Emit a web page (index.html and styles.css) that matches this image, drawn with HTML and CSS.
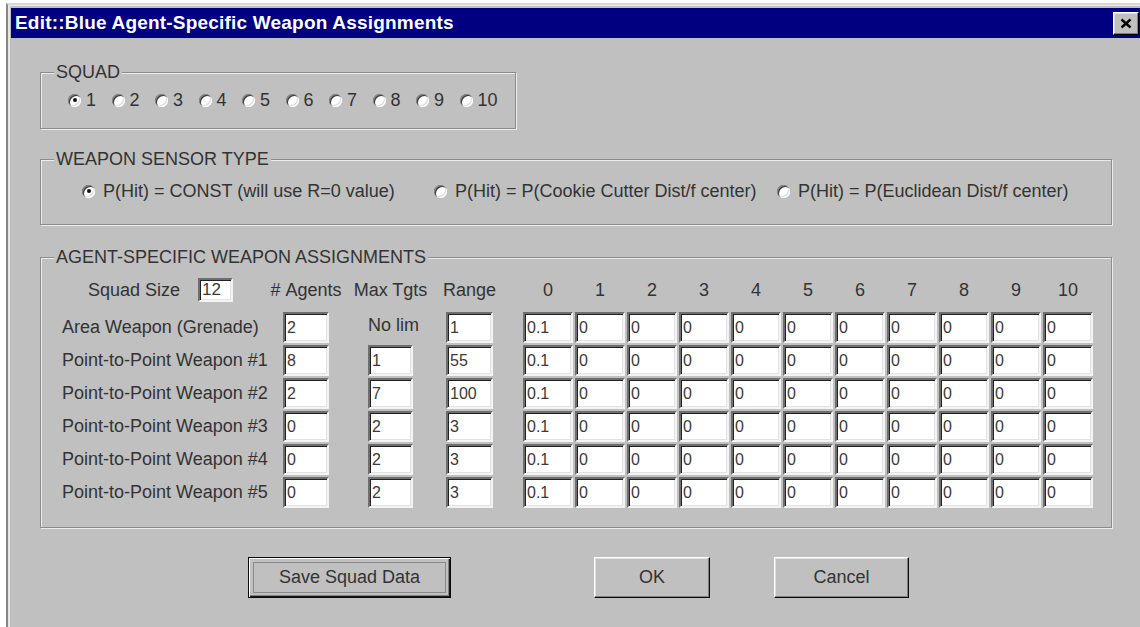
FILE: index.html
```html
<!DOCTYPE html>
<html lang="en">
<head>
<meta charset="utf-8">
<title>Edit::Blue Agent-Specific Weapon Assignments</title>
<link rel="stylesheet" href="styles.css">
</head>
<body>
<div class="window">
  <div class="titlebar">
    <span class="title">Edit::Blue Agent-Specific Weapon Assignments</span>
    <span class="close" aria-label="Close">
      <svg width="12" height="11" viewBox="0 0 12 11"><path d="M1.5 1.5 L10.5 9.5 M10.5 1.5 L1.5 9.5" stroke="#000" stroke-width="2.4" fill="none"/></svg>
    </span>
  </div>

  <div class="client">
    <fieldset class="group squad">
      <legend>SQUAD</legend>
      <div class="squad-opts">
        <label class="opt"><span class="radio on"></span>1</label>
        <label class="opt"><span class="radio"></span>2</label>
        <label class="opt"><span class="radio"></span>3</label>
        <label class="opt"><span class="radio"></span>4</label>
        <label class="opt"><span class="radio"></span>5</label>
        <label class="opt"><span class="radio"></span>6</label>
        <label class="opt"><span class="radio"></span>7</label>
        <label class="opt"><span class="radio"></span>8</label>
        <label class="opt"><span class="radio"></span>9</label>
        <label class="opt last"><span class="radio"></span>10</label>
      </div>
    </fieldset>

    <fieldset class="group sensor">
      <legend>WEAPON SENSOR TYPE</legend>
      <div class="sensor-opts">
        <label class="opt wide"><span class="radio on"></span>P(Hit) = CONST (will use R=0 value)</label>
        <label class="opt wide"><span class="radio"></span>P(Hit) = P(Cookie Cutter Dist/f center)</label>
        <label class="opt wide"><span class="radio"></span>P(Hit) = P(Euclidean Dist/f center)</label>
      </div>
    </fieldset>

    <fieldset class="group assign">
      <legend>AGENT-SPECIFIC WEAPON ASSIGNMENTS</legend>
      <div class="grid">
        <!-- header row -->
        <div class="hcell squad-size"><span>Squad Size</span><span class="field small">12</span></div>
        <div class="hcell"><span class="hd w46">#&nbsp;Agents</span></div>
        <div class="hcell"><span class="hd w45">Max Tgts</span></div>
        <div class="hcell"><span class="hd w47">Range</span></div>
        <div class="hcell"><span class="hd w50">0</span></div>
        <div class="hcell"><span class="hd w50">1</span></div>
        <div class="hcell"><span class="hd w50">2</span></div>
        <div class="hcell"><span class="hd w50">3</span></div>
        <div class="hcell"><span class="hd w50">4</span></div>
        <div class="hcell"><span class="hd w50">5</span></div>
        <div class="hcell"><span class="hd w50">6</span></div>
        <div class="hcell"><span class="hd w50">7</span></div>
        <div class="hcell"><span class="hd w50">8</span></div>
        <div class="hcell"><span class="hd w50">9</span></div>
        <div class="hcell"><span class="hd w50">10</span></div>

        <!-- Area weapon -->
        <div class="rlabel">Area Weapon (Grenade)</div>
        <div class="field w46">2</div>
        <div class="nolim w45">No lim</div>
        <div class="field w47">1</div>
        <div class="field w50">0.1</div><div class="field w50">0</div><div class="field w50">0</div><div class="field w50">0</div><div class="field w50">0</div><div class="field w50">0</div><div class="field w50">0</div><div class="field w50">0</div><div class="field w50">0</div><div class="field w50">0</div><div class="field w50">0</div>

        <!-- Point-to-point #1 -->
        <div class="rlabel">Point-to-Point Weapon #1</div>
        <div class="field w46">8</div>
        <div class="field w45">1</div>
        <div class="field w47">55</div>
        <div class="field w50">0.1</div><div class="field w50">0</div><div class="field w50">0</div><div class="field w50">0</div><div class="field w50">0</div><div class="field w50">0</div><div class="field w50">0</div><div class="field w50">0</div><div class="field w50">0</div><div class="field w50">0</div><div class="field w50">0</div>

        <!-- Point-to-point #2 -->
        <div class="rlabel">Point-to-Point Weapon #2</div>
        <div class="field w46">2</div>
        <div class="field w45">7</div>
        <div class="field w47">100</div>
        <div class="field w50">0.1</div><div class="field w50">0</div><div class="field w50">0</div><div class="field w50">0</div><div class="field w50">0</div><div class="field w50">0</div><div class="field w50">0</div><div class="field w50">0</div><div class="field w50">0</div><div class="field w50">0</div><div class="field w50">0</div>

        <!-- Point-to-point #3 -->
        <div class="rlabel">Point-to-Point Weapon #3</div>
        <div class="field w46">0</div>
        <div class="field w45">2</div>
        <div class="field w47">3</div>
        <div class="field w50">0.1</div><div class="field w50">0</div><div class="field w50">0</div><div class="field w50">0</div><div class="field w50">0</div><div class="field w50">0</div><div class="field w50">0</div><div class="field w50">0</div><div class="field w50">0</div><div class="field w50">0</div><div class="field w50">0</div>

        <!-- Point-to-point #4 -->
        <div class="rlabel">Point-to-Point Weapon #4</div>
        <div class="field w46">0</div>
        <div class="field w45">2</div>
        <div class="field w47">3</div>
        <div class="field w50">0.1</div><div class="field w50">0</div><div class="field w50">0</div><div class="field w50">0</div><div class="field w50">0</div><div class="field w50">0</div><div class="field w50">0</div><div class="field w50">0</div><div class="field w50">0</div><div class="field w50">0</div><div class="field w50">0</div>

        <!-- Point-to-point #5 -->
        <div class="rlabel">Point-to-Point Weapon #5</div>
        <div class="field w46">0</div>
        <div class="field w45">2</div>
        <div class="field w47">3</div>
        <div class="field w50">0.1</div><div class="field w50">0</div><div class="field w50">0</div><div class="field w50">0</div><div class="field w50">0</div><div class="field w50">0</div><div class="field w50">0</div><div class="field w50">0</div><div class="field w50">0</div><div class="field w50">0</div><div class="field w50">0</div>
      </div>
    </fieldset>

    <div class="actions">
      <span class="btn default save"><span class="focus">Save Squad Data</span></span>
      <span class="btn ok">OK</span>
      <span class="btn cancel">Cancel</span>
    </div>
  </div>
</div>
</body>
</html>
```

FILE: styles.css
```css
* { box-sizing: border-box; }

html, body {
  margin: 0;
  height: 100%;
  overflow: hidden;
  background: #ffffff;
}

body {
  font-family: "Liberation Sans", Arial, sans-serif;
  font-size: 18px;
  color: #333333;
}

/* dialog frame */
.window {
  margin: 3px 0 0 6px;
  height: calc(100vh - 3px);
  border-left: 2px solid #868686;
  border-top: 2px solid #d8d8d8;
  padding: 3px 0 0 3px;
  background: #c0c0c0;
  box-shadow: inset 2px 0 #e6e6e6, inset 0 1px #eeeeee;
}

.titlebar {
  height: 30px;
  background: #000080;
  color: #ffffff;
  display: flex;
  align-items: center;
  justify-content: space-between;
  padding-left: 4px;
}

.title {
  font-weight: bold;
  font-size: 19px;
  letter-spacing: 0.2px;
  line-height: 30px;
  white-space: nowrap;
}

.close {
  width: 26px;
  height: 23px;
  margin-right: 1px;
  background: #c0c0c0;
  display: flex;
  align-items: center;
  justify-content: center;
  border: 1px solid;
  border-color: #ffffff #000000 #000000 #ffffff;
  box-shadow: inset -1px -1px #808080, inset 1px 1px #dfdfdf;
}

.client {
  padding: 25px 0 0 29px;
}

/* group boxes */
.group {
  margin: 0;
  min-inline-size: 0;
  border: 1px solid #8c8c8c;
  box-shadow: inset 1px 1px #ececec, 1px 1px #ececec;
  padding: 0;
}

.group legend {
  margin-left: 13px;
  padding: 0 2px;
  line-height: 18px;
  height: 18px;
  background: #c0c0c0;
  white-space: nowrap;
}

.squad {
  width: 476px;
  padding: 10px 0 19px 0;
}

.sensor {
  width: 1072px;
  margin-top: 21px;
  padding: 14px 0 24px 0;
}

.assign {
  width: 1072px;
  margin-top: 23px;
  padding: 12px 0 17px 0;
}

/* radio buttons */
.squad-opts {
  display: flex;
  height: 18px;
  padding-left: 27px;
}

.sensor-opts {
  display: grid;
  grid-template-columns: 352px 343px auto;
  height: 18px;
  padding-left: 41px;
}

.opt {
  display: flex;
  align-items: center;
  gap: 5px;
  line-height: 18px;
  white-space: nowrap;
  flex: 0 0 43.5px;
}

.opt.last { flex: 0 0 auto; }
.opt.wide { gap: 8px; }

.radio {
  position: relative;
  flex: 0 0 auto;
  width: 13px;
  height: 13px;
  border-radius: 50%;
  background: #ffffff;
  box-shadow:
    inset 1px 1px 0 #8a8a8a,
    inset 2px 2px 0 #3c3c3c,
    inset -1px -1px 0 #ffffff,
    inset -2px -2px 0 #dcdcdc;
}

.radio.on::after {
  content: "";
  position: absolute;
  left: 4.5px;
  top: 4.5px;
  width: 4px;
  height: 4px;
  border-radius: 50%;
  background: #111111;
}

/* assignment table */
.grid {
  display: grid;
  grid-template-columns: 221px 85px 78px 77px repeat(11, 52px);
  grid-auto-rows: 33px;
  grid-template-rows: 34px;
  padding-left: 21px;
}

.hcell {
  height: 24px;
  display: flex;
  align-items: center;
}

.squad-size {
  padding-left: 26px;
  gap: 18px;
  white-space: nowrap;
}

.hd {
  display: flex;
  justify-content: center;
  white-space: nowrap;
}

.w45 { width: 45px; }
.w46 { width: 46px; }
.w47 { width: 47px; }
.w50 { width: 50px; }

.rlabel {
  line-height: 31px;
  white-space: nowrap;
}

.nolim {
  line-height: 26px;
  text-align: center;
  white-space: nowrap;
}

.field {
  height: 31px;
  background: #ffffff;
  border: 2px solid;
  border-color: #6e6e6e #f4f4f4 #f4f4f4 #6e6e6e;
  box-shadow: inset 1px 1px 0 #222222, inset -1px -1px 0 #e2e2e2;
  padding-left: 2px;
  font-size: 16px;
  line-height: 27px;
  color: #3a3a3a;
  white-space: nowrap;
  overflow: hidden;
}

.field.small {
  width: 35px;
  height: 24px;
  line-height: 20px;
  font-size: 17px;
}

/* command buttons */
.actions {
  display: flex;
  margin-top: 29px;
  padding-left: 208px;
}

.btn {
  height: 41px;
  display: flex;
  align-items: center;
  justify-content: center;
  background: #c0c0c0;
  border: 1px solid;
  border-color: #ffffff #0a0a0a #0a0a0a #ffffff;
  box-shadow: inset -1px -1px 0 #808080, inset 1px 1px 0 #dfdfdf;
  white-space: nowrap;
}

.btn.default {
  border: 1px solid #0a0a0a;
  box-shadow: inset 1px 1px 0 #ffffff, inset -1px -1px 0 #1a1a1a, inset -2px -2px 0 #808080;
  padding: 4px;
}

.focus {
  flex: 1;
  align-self: stretch;
  display: flex;
  align-items: center;
  justify-content: center;
  border: 1px solid #8a8a8a;
}

.save { width: 203px; }
.ok { width: 116px; margin-left: 143px; }
.cancel { width: 135px; margin-left: 64px; }
```
